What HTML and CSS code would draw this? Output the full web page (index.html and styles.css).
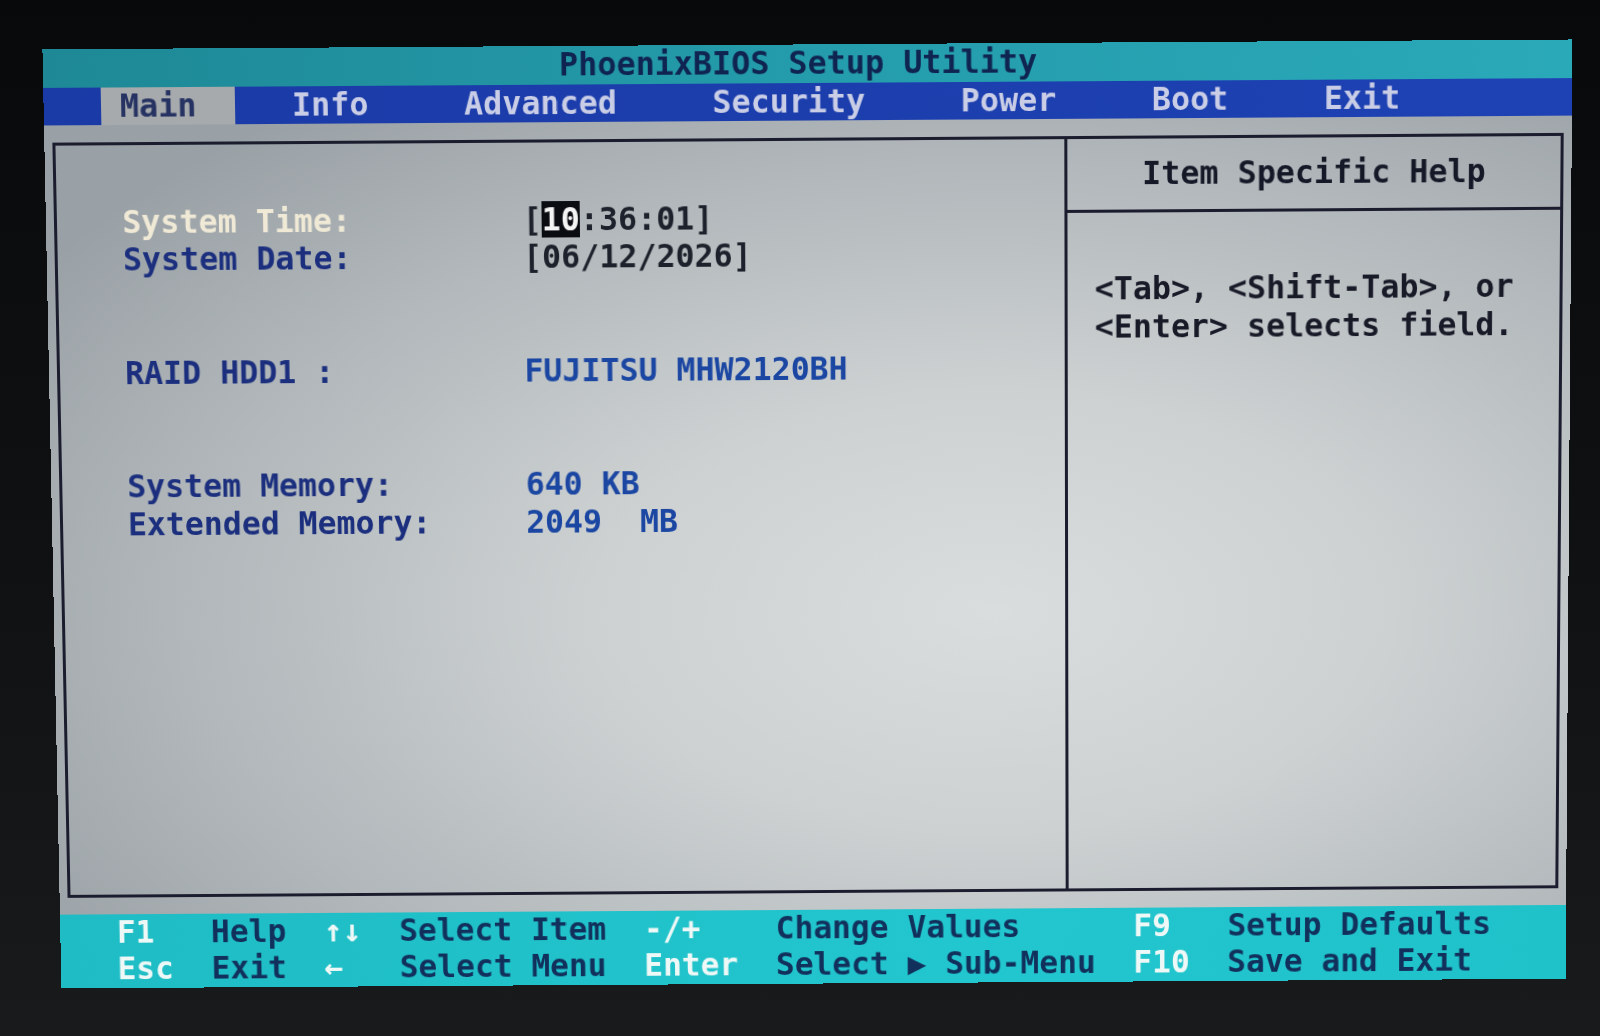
FILE: index.html
```html
<!DOCTYPE html>
<html lang="en">
  <head>
    <meta charset="UTF-8" />
    <title>PhoenixBIOS Setup Utility</title>
    <link rel="stylesheet" href="styles.css">
  </head>
  <body>
    <div class="screen">
      <div class="title-bar">PhoenixBIOS Setup Utility</div>
      <div class="menu-bar">   <span class="tab-active"> Main  </span>   Info     Advanced     Security     Power     Boot     Exit</div>
      <div class="work">
        <div class="frame">
          <div class="main-pane">
            <div class="field selected first"><span class="label">System Time:</span><span class="value">[<span class="cursor">10</span>:36:01]</span></div>
            <div class="field"><span class="label">System Date:</span><span class="value">[06/12/2026]</span></div>
            <div class="field gap"><span class="label">RAID HDD1 :</span><span class="value info">FUJITSU MHW2120BH</span></div>
            <div class="field gap"><span class="label">System Memory:</span><span class="value info">640 KB</span></div>
            <div class="field"><span class="label">Extended Memory:</span><span class="value info">2049  MB</span></div>
          </div>
          <div class="help-pane">
            <div class="help-head">Item Specific Help</div>
            <div class="help-text">
              <div class="line">&lt;Tab&gt;, &lt;Shift-Tab&gt;, or</div>
              <div class="line">&lt;Enter&gt; selects field.</div>
            </div>
          </div>
        </div>
      </div>
      <div class="key-bar">
        <div class="key-row">   <span class="key">F1</span>   Help  <span class="key">↑↓</span>  Select Item  <span class="key">-/+</span>    Change Values      <span class="key">F9</span>   Setup Defaults</div>
        <div class="key-row">   <span class="key">Esc</span>  Exit  <span class="key">←</span>   Select Menu  <span class="key">Enter</span>  Select ▶ Sub-Menu  <span class="key">F10</span>  Save and Exit</div>
      </div>
    </div>
  </body>
</html>
```

FILE: styles.css
```css
* {
  margin: 0;
  padding: 0;
  box-sizing: border-box;
}

:root {
  --row: 37.6px;
  --line: #1b1d2e;
}

body {
  height: 100vh;
  display: flex;
  align-items: center;
  justify-content: center;
  padding-left: 20px;
  background: linear-gradient(180deg, #07090b 0%, #0f1113 55%, #181a1c 100%);
  overflow: hidden;
}

/* 80 x 25 text screen, one cell = 1ch x var(--row) */
.screen {
  width: 1517px;
  height: 940px;
  display: flex;
  flex-direction: column;
  font-family: "DejaVu Sans Mono", monospace;
  font-weight: bold;
  font-size: 31.5px;
  line-height: var(--row);
  transform: perspective(2400px) rotate(-0.37deg) rotateX(-2.5deg);
}

.title-bar,
.menu-bar,
.field,
.line,
.key-row {
  white-space: pre;
}

.title-bar {
  height: var(--row);
  padding-left: 27ch;
  background: linear-gradient(90deg, #1e8896 0%, #249cab 50%, #2aa9b9 100%);
  color: #0f2450;
}

.menu-bar {
  height: var(--row);
  background: linear-gradient(90deg, #1a3aa6 0%, #1e42b4 100%);
  color: #c9cde6;
}

.tab-active {
  display: inline-block;
  background: #a7aaac;
  color: #263262;
}

.work {
  flex: 1;
  padding: calc(var(--row) / 2 - 1.5px) 8px;
  background: radial-gradient(ellipse 75% 80% at 62% 62%, #dadddd 0%, #cdd1d2 35%, #b2b8bb 70%, #9aa1a6 100%);
}

.frame {
  height: 100%;
  display: flex;
  border: 3px solid var(--line);
}

.main-pane {
  width: calc(53ch - 3px);
  padding: calc(var(--row) / 2 + 1px) 0 0 calc(3.5ch - 1.5px);
}

.field {
  display: flex;
  height: var(--row);
}

.field.first {
  margin-top: var(--row);
}

.field.gap {
  margin-top: calc(var(--row) * 2);
}

.label {
  width: 21ch;
  color: #1b2f7e;
}

.field.selected .label {
  color: #efe9d6;
}

.value {
  color: #1d212b;
}

.value.info {
  color: #1b47a3;
}

.cursor {
  background: #0b0b12;
  color: #f4f4f4;
}

.help-pane {
  flex: 1;
  display: flex;
  flex-direction: column;
  border-left: 3px solid var(--line);
}

.help-head {
  height: calc(var(--row) * 2 - 3px);
  display: flex;
  align-items: center;
  justify-content: center;
  border-bottom: 3px solid var(--line);
  color: #151827;
}

.help-text {
  padding: calc(var(--row) * 1.5 + 1px) 0 0 calc(1.5ch - 1.5px);
  color: #181a28;
}

.key-bar {
  height: calc(var(--row) * 2);
  background: linear-gradient(90deg, #1fbcc5 0%, #22c6ce 60%, #20c2ca 100%);
  color: #12305c;
}

.key-row {
  height: var(--row);
}

.key {
  color: #eef8f6;
}
```
